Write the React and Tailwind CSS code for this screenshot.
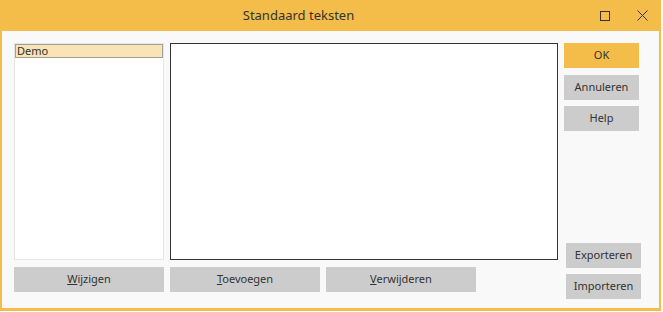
import React from 'react'

const font = { fontFamily: '"Noto Sans", "Liberation Sans", sans-serif' }

function Btn({ children, className = '' }) {
  return (
    <button className={`h-[25px] flex items-center justify-center text-[11px] text-[#333] bg-[#cccccc] ${className}`}>
      {children}
    </button>
  )
}

export default function App() {
  return (
    <div className="w-[663px] h-[312px] bg-white" style={font}>
      <div className="w-[661px] h-[311px] flex flex-col bg-[#f4bd4a]">
        {/* title bar */}
        <div className="h-[31px] flex items-center shrink-0">
          <div className="flex-1 text-center text-[13px] text-[#333]">Standaard teksten</div>
          <div className="w-[64px] flex items-center">
            <svg width="10" height="10" viewBox="0 0 10 10" className="ml-[3px]">
              <rect x="0.5" y="0.5" width="9" height="9" fill="none" stroke="#333" strokeWidth="1" />
            </svg>
            <svg width="11" height="11" viewBox="0 0 11 11" className="ml-[27px]">
              <path d="M0.5 0.5L10.5 10.5M10.5 0.5L0.5 10.5" stroke="#333" strokeWidth="1" />
            </svg>
          </div>
        </div>

        {/* body */}
        <div className="flex-1 mx-[2px] mb-[3px] bg-[#f9f9f9] flex pl-[12px] pt-[12px] gap-[6px]">
          <div className="w-[150px] flex flex-col">
            <div className="h-[217px] bg-white border border-[#e6e6e6] p-0">
              <div className="h-[14px] bg-[#fae3b4] border border-[#a0a0a0] text-[11px] leading-[12px] text-[#333] pl-[1px]">Demo</div>
            </div>
            <Btn className="mt-[7px] w-[150px]"><span><span className="underline">W</span>ijzigen</span></Btn>
          </div>

          <div className="w-[388px] flex flex-col">
            <div className="h-[217px] bg-white border border-[#333]" />
            <div className="flex gap-[6px] mt-[7px]">
              <Btn className="w-[150px]"><span><span className="underline">T</span>oevoegen</span></Btn>
              <Btn className="w-[150px]"><span><span className="underline">V</span>erwijderen</span></Btn>
            </div>
          </div>

          <div className="w-[77px] flex flex-col">
            <Btn className="w-[75px] bg-[#f4bd4a]">OK</Btn>
            <Btn className="w-[75px] mt-[7px]">Annuleren</Btn>
            <Btn className="w-[75px] mt-[6px]">Help</Btn>
            <div className="flex-1" />
            <Btn className="w-[75px] ml-[2px]">Exporteren</Btn>
            <Btn className="w-[75px] ml-[2px] mt-[6px] mb-[9px]">Importeren</Btn>
          </div>
        </div>
      </div>
    </div>
  )
}
